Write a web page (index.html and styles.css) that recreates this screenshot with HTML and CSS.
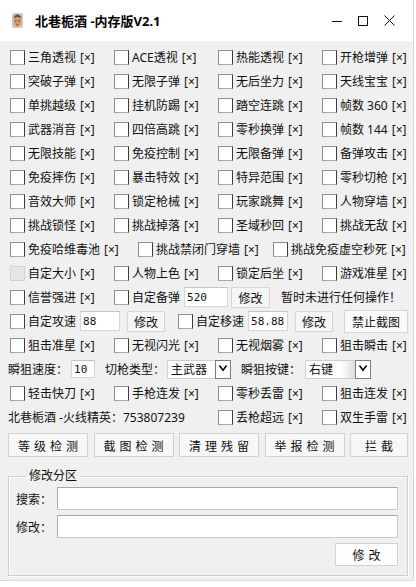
FILE: index.html
```html
<!DOCTYPE html>
<html lang="zh-CN">
<head>
    <meta charset="UTF-8">
    <meta name="viewport" content="width=device-width, initial-scale=1.0">
    <link rel="stylesheet" href="styles.css">
</head>
<body>
    <div class="window">
        <div class="titlebar">
            <svg class="logo" width="11" height="15" viewBox="0 0 11 15">
                <rect x="0" y="0" width="11" height="15" rx="2" fill="#cfc6bd"/>
                <ellipse cx="5.5" cy="8.5" rx="4" ry="5" fill="#d39a6e"/>
                <path d="M1.5 6 Q2 1.5 5.5 1.5 Q9 1.5 9.5 6 Q8 3.5 5.5 4 Q3 3.5 1.5 6 Z" fill="#6b4a35"/>
                <rect x="3" y="7.5" width="1.5" height="1" fill="#4a3022"/>
                <rect x="6.5" y="7.5" width="1.5" height="1" fill="#4a3022"/>
                <path d="M4 11.5 Q5.5 12.5 7 11.5" stroke="#8a4a33" stroke-width="0.8" fill="none"/>
            </svg>
            <span class="title">北巷栀酒 -内存版V2.1</span>
            <div class="controls">
                <svg width="10" height="10" viewBox="0 0 10 10"><path d="M0 5.5 H10" stroke="#111" stroke-width="1"/></svg>
                <svg width="10" height="10" viewBox="0 0 10 10"><rect x="0.5" y="0.5" width="9" height="9" stroke="#111" stroke-width="1" fill="none"/></svg>
                <svg width="11" height="11" viewBox="0 0 11 11"><path d="M0.5 0.5 L10.5 10.5 M10.5 0.5 L0.5 10.5" stroke="#111" stroke-width="1"/></svg>
            </div>
        </div>

        <div class="panel">
            <div class="grid">
                <label class="opt"><input type="checkbox"><span>三角透视</span><span class="x">[×]</span></label>
                <label class="opt"><input type="checkbox"><span>ACE透视</span><span class="x">[×]</span></label>
                <label class="opt"><input type="checkbox"><span>热能透视</span><span class="x">[×]</span></label>
                <label class="opt"><input type="checkbox"><span>开枪增弹</span><span class="x">[×]</span></label>

                <label class="opt"><input type="checkbox"><span>突破子弹</span><span class="x">[×]</span></label>
                <label class="opt"><input type="checkbox"><span>无限子弹</span><span class="x">[×]</span></label>
                <label class="opt"><input type="checkbox"><span>无后坐力</span><span class="x">[×]</span></label>
                <label class="opt"><input type="checkbox"><span>天线宝宝</span><span class="x">[×]</span></label>

                <label class="opt"><input type="checkbox"><span>单挑越级</span><span class="x">[×]</span></label>
                <label class="opt"><input type="checkbox"><span>挂机防踢</span><span class="x">[×]</span></label>
                <label class="opt"><input type="checkbox"><span>踏空连跳</span><span class="x">[×]</span></label>
                <label class="opt"><input type="checkbox"><span>帧数 360</span><span class="x">[×]</span></label>

                <label class="opt"><input type="checkbox"><span>武器消音</span><span class="x">[×]</span></label>
                <label class="opt"><input type="checkbox"><span>四倍高跳</span><span class="x">[×]</span></label>
                <label class="opt"><input type="checkbox"><span>零秒换弹</span><span class="x">[×]</span></label>
                <label class="opt"><input type="checkbox"><span>帧数 144</span><span class="x">[×]</span></label>

                <label class="opt"><input type="checkbox"><span>无限技能</span><span class="x">[×]</span></label>
                <label class="opt"><input type="checkbox"><span>免疫控制</span><span class="x">[×]</span></label>
                <label class="opt"><input type="checkbox"><span>无限备弹</span><span class="x">[×]</span></label>
                <label class="opt"><input type="checkbox"><span>备弹攻击</span><span class="x">[×]</span></label>

                <label class="opt"><input type="checkbox"><span>免疫摔伤</span><span class="x">[×]</span></label>
                <label class="opt"><input type="checkbox"><span>暴击特效</span><span class="x">[×]</span></label>
                <label class="opt"><input type="checkbox"><span>特异范围</span><span class="x">[×]</span></label>
                <label class="opt"><input type="checkbox"><span>零秒切枪</span><span class="x">[×]</span></label>

                <label class="opt"><input type="checkbox"><span>音效大师</span><span class="x">[×]</span></label>
                <label class="opt"><input type="checkbox"><span>锁定枪械</span><span class="x">[×]</span></label>
                <label class="opt"><input type="checkbox"><span>玩家跳舞</span><span class="x">[×]</span></label>
                <label class="opt"><input type="checkbox"><span>人物穿墙</span><span class="x">[×]</span></label>

                <label class="opt"><input type="checkbox"><span>挑战锁怪</span><span class="x">[×]</span></label>
                <label class="opt"><input type="checkbox"><span>挑战掉落</span><span class="x">[×]</span></label>
                <label class="opt"><input type="checkbox"><span>圣域秒回</span><span class="x">[×]</span></label>
                <label class="opt"><input type="checkbox"><span>挑战无敌</span><span class="x">[×]</span></label>
            </div>

            <div class="row">
                <label class="opt w128"><input type="checkbox"><span>免疫哈维毒池</span><span class="x">[×]</span></label>
                <label class="opt w135"><input type="checkbox"><span>挑战禁闭门穿墙</span><span class="x">[×]</span></label>
                <label class="opt"><input type="checkbox"><span>挑战免疫虚空秒死</span><span class="x">[×]</span></label>
            </div>

            <div class="grid">
                <label class="opt"><input type="checkbox" disabled><span>自定大小</span><span class="x">[×]</span></label>
                <label class="opt"><input type="checkbox"><span>人物上色</span><span class="x">[×]</span></label>
                <label class="opt"><input type="checkbox"><span>锁定后坐</span><span class="x">[×]</span></label>
                <label class="opt"><input type="checkbox"><span>游戏准星</span><span class="x">[×]</span></label>
            </div>

            <div class="row">
                <label class="opt w104"><input type="checkbox"><span>信誉强进</span><span class="x">[×]</span></label>
                <label class="opt"><input type="checkbox"><span>自定备弹</span></label>
                <input class="num w44" type="text" value="520">
                <button class="small">修改</button>
                <span class="status">暂时未进行任何操作！</span>
            </div>

            <div class="row">
                <label class="opt"><input type="checkbox"><span>自定攻速</span></label>
                <input class="num w40" type="text" value="88">
                <button class="small">修改</button>
                <label class="opt gap-l"><input type="checkbox"><span>自定移速</span></label>
                <input class="num w40" type="text" value="58.88">
                <button class="small">修改</button>
                <button class="small wide">禁止截图</button>
            </div>

            <div class="grid">
                <label class="opt"><input type="checkbox"><span>狙击准星</span><span class="x">[×]</span></label>
                <label class="opt"><input type="checkbox"><span>无视闪光</span><span class="x">[×]</span></label>
                <label class="opt"><input type="checkbox"><span>无视烟雾</span><span class="x">[×]</span></label>
                <label class="opt"><input type="checkbox"><span>狙击瞬击</span><span class="x">[×]</span></label>
            </div>

            <div class="row">
                <span>瞬狙速度：</span>
                <input class="num speed" type="text" value="10">
                <span class="gap-t">切枪类型：</span>
                <div class="select gun">
                    <span class="value">主武器</span>
                    <span class="arrow"><svg width="10" height="8" viewBox="0 0 10 8"><path d="M0.5 0.5 L5 6.5 L9.5 0.5 L7.5 0.5 L5 4 L2.5 0.5 Z" fill="#000"/></svg></span>
                </div>
                <span class="gap-t">瞬狙按键：</span>
                <div class="select key">
                    <span class="value">右键</span>
                    <span class="arrow"><svg width="10" height="8" viewBox="0 0 10 8"><path d="M0.5 0.5 L5 6.5 L9.5 0.5 L7.5 0.5 L5 4 L2.5 0.5 Z" fill="#000"/></svg></span>
                </div>
            </div>

            <div class="grid">
                <label class="opt"><input type="checkbox"><span>轻击快刀</span><span class="x">[×]</span></label>
                <label class="opt"><input type="checkbox"><span>手枪连发</span><span class="x">[×]</span></label>
                <label class="opt"><input type="checkbox"><span>零秒丢雷</span><span class="x">[×]</span></label>
                <label class="opt"><input type="checkbox"><span>狙击连发</span><span class="x">[×]</span></label>

                <span class="info">北巷栀酒 -火线精英：753807239</span>
                <label class="opt"><input type="checkbox"><span>丢枪超远</span><span class="x">[×]</span></label>
                <label class="opt"><input type="checkbox"><span>双生手雷</span><span class="x">[×]</span></label>
            </div>

            <div class="actions">
                <button class="btn">等级检测</button>
                <button class="btn">截图检测</button>
                <button class="btn">清理残留</button>
                <button class="btn">举报检测</button>
                <button class="btn short">拦截</button>
            </div>

            <fieldset class="group">
                <legend>修改分区</legend>
                <div class="field">
                    <span>搜索：</span>
                    <input type="text">
                </div>
                <div class="field">
                    <span>修改：</span>
                    <input type="text">
                </div>
                <div class="field-end">
                    <button class="btn apply">修改</button>
                </div>
            </fieldset>
        </div>
    </div>
</body>
</html>
```

FILE: styles.css
```css
* {
    box-sizing: border-box;
}

body {
    margin: 0;
    background: #ffffff;
    font-family: "Noto Sans", "Noto Sans CJK SC", sans-serif;
    font-size: 12px;
    color: #111;
}

.window {
    width: 414px;
    height: 581px;
    background: #f0f0f0;
    border-right: 1px solid #d8d8d8;
    border-bottom: 1px solid #d8d8d8;
}

/* title bar */
.titlebar {
    height: 41px;
    background: #fff;
    display: flex;
    align-items: center;
    padding-left: 12px;
    padding-right: 18px;
}

.logo {
    flex: none;
}

.title {
    margin-left: 12px;
    font-family: "Noto Sans", "Noto Sans CJK SC", sans-serif;
    font-weight: 700;
    font-size: 13px;
    color: #000;
}

.controls {
    margin-left: auto;
    display: flex;
    align-items: center;
    gap: 16px;
}

/* main panel */
.panel {
    padding: 4px 0 0 8px;
}

.grid {
    display: grid;
    grid-template-columns: repeat(4, 104px);
    grid-auto-rows: 24px;
    align-items: center;
}

.row {
    display: flex;
    align-items: center;
    height: 24px;
    white-space: nowrap;
}

.row > * {
    flex: none;
}

.opt {
    display: flex;
    align-items: center;
    white-space: nowrap;
}

.opt > span {
    flex: none;
}

.opt .x {
    margin-left: 4px;
}

.opt input {
    appearance: none;
    -webkit-appearance: none;
    width: 15px;
    height: 15px;
    margin: 0 3px 0 2px;
    background: #fff;
    border: 1px solid #8d8d8d;
    border-right-color: #3c3c3c;
    border-bottom-color: #a8a8a8;
    flex: none;
}

.opt input:disabled {
    background: #e6e6e6;
    border-color: #d2d2d2;
}

.w104 { width: 104px; }
.w128 { width: 128px; }
.w135 { width: 135px; }

.gap-l {
    margin-left: 11px;
}

.gap-t {
    margin-left: 10px;
}

.info {
    grid-column: span 2;
    white-space: nowrap;
}

/* small inputs and buttons */
.num {
    height: 20px;
    margin-left: 4px;
    padding: 0 2px;
    border: 1px solid #d6d6d6;
    border-top-color: #c4c4c4;
    background: #fff;
    font-family: "DejaVu Sans Mono", monospace;
    font-size: 11px;
    color: #111;
}

.w44 { width: 44px; }
.w40 { width: 40px; }

.speed {
    width: 24px;
    height: 18px;
    margin-left: 3px;
}

.small {
    width: 38px;
    height: 21px;
    margin-left: 7px;
    padding: 0;
    background: #f5f5f5;
    border: 1px solid #d6d6d6;
    font-family: "Noto Sans CJK SC", sans-serif;
    font-size: 12px;
    color: #111;
}

.row .w44 + .small {
    width: 39px;
    margin-left: 3px;
}

.small.wide {
    width: 64px;
    height: 23px;
    margin-left: 11px;
    background: #fafafa;
}

.status {
    margin-left: 11px;
}

/* drop-down boxes */
.select {
    display: flex;
    height: 19px;
    background: #fff;
    border: 1px solid #d0d0d0;
}

.select .value {
    flex: 1;
    padding-left: 3px;
    line-height: 17px;
}

.select .arrow {
    width: 16px;
    display: flex;
    align-items: center;
    justify-content: center;
    background: #fff;
    border: 1px solid #7d7d7d;
    margin: -1px -1px -1px 0;
}

.gun {
    width: 64px;
    margin-left: 2px;
}

.key {
    width: 66px;
    margin-left: 4px;
    background: linear-gradient(to right, #fff 55%, #cfcfcf 85%, #fff 100%);
}

/* action buttons */
.actions {
    display: flex;
    justify-content: space-between;
    width: 400px;
    margin-top: 4px;
}

.btn {
    width: 80px;
    height: 24px;
    padding: 0;
    background: #f7f7f7;
    border: 1px solid #d2d2d2;
    font-family: "Noto Sans CJK SC", sans-serif;
    font-size: 12px;
    letter-spacing: 4px;
    text-indent: 4px;
    color: #111;
}

.btn.short {
    width: 58px;
}

/* group box */
.group {
    width: 400px;
    margin: 12px 0 0 0;
    padding: 4px 9px 9px 7px;
    border: 1px solid #cfcfcf;
    box-shadow: inset 1px 1px 0 #fff, 1px 1px 0 #fff;
}

.group legend {
    margin-left: 10px;
    padding: 0 3px;
    line-height: 14px;
}

.field {
    display: flex;
    align-items: center;
    margin-bottom: 5px;
}

.field span {
    width: 41px;
    flex: none;
}

.field input {
    flex: 1;
    height: 23px;
    border: 1px solid #c9c9c9;
    border-top-color: #a7a7a7;
    border-left-color: #b0b0b0;
    background: #fff;
}

.field-end {
    display: flex;
    justify-content: flex-end;
}

.btn.apply {
    width: 63px;
    height: 23px;
    background: #fdfdfd;
}
```
